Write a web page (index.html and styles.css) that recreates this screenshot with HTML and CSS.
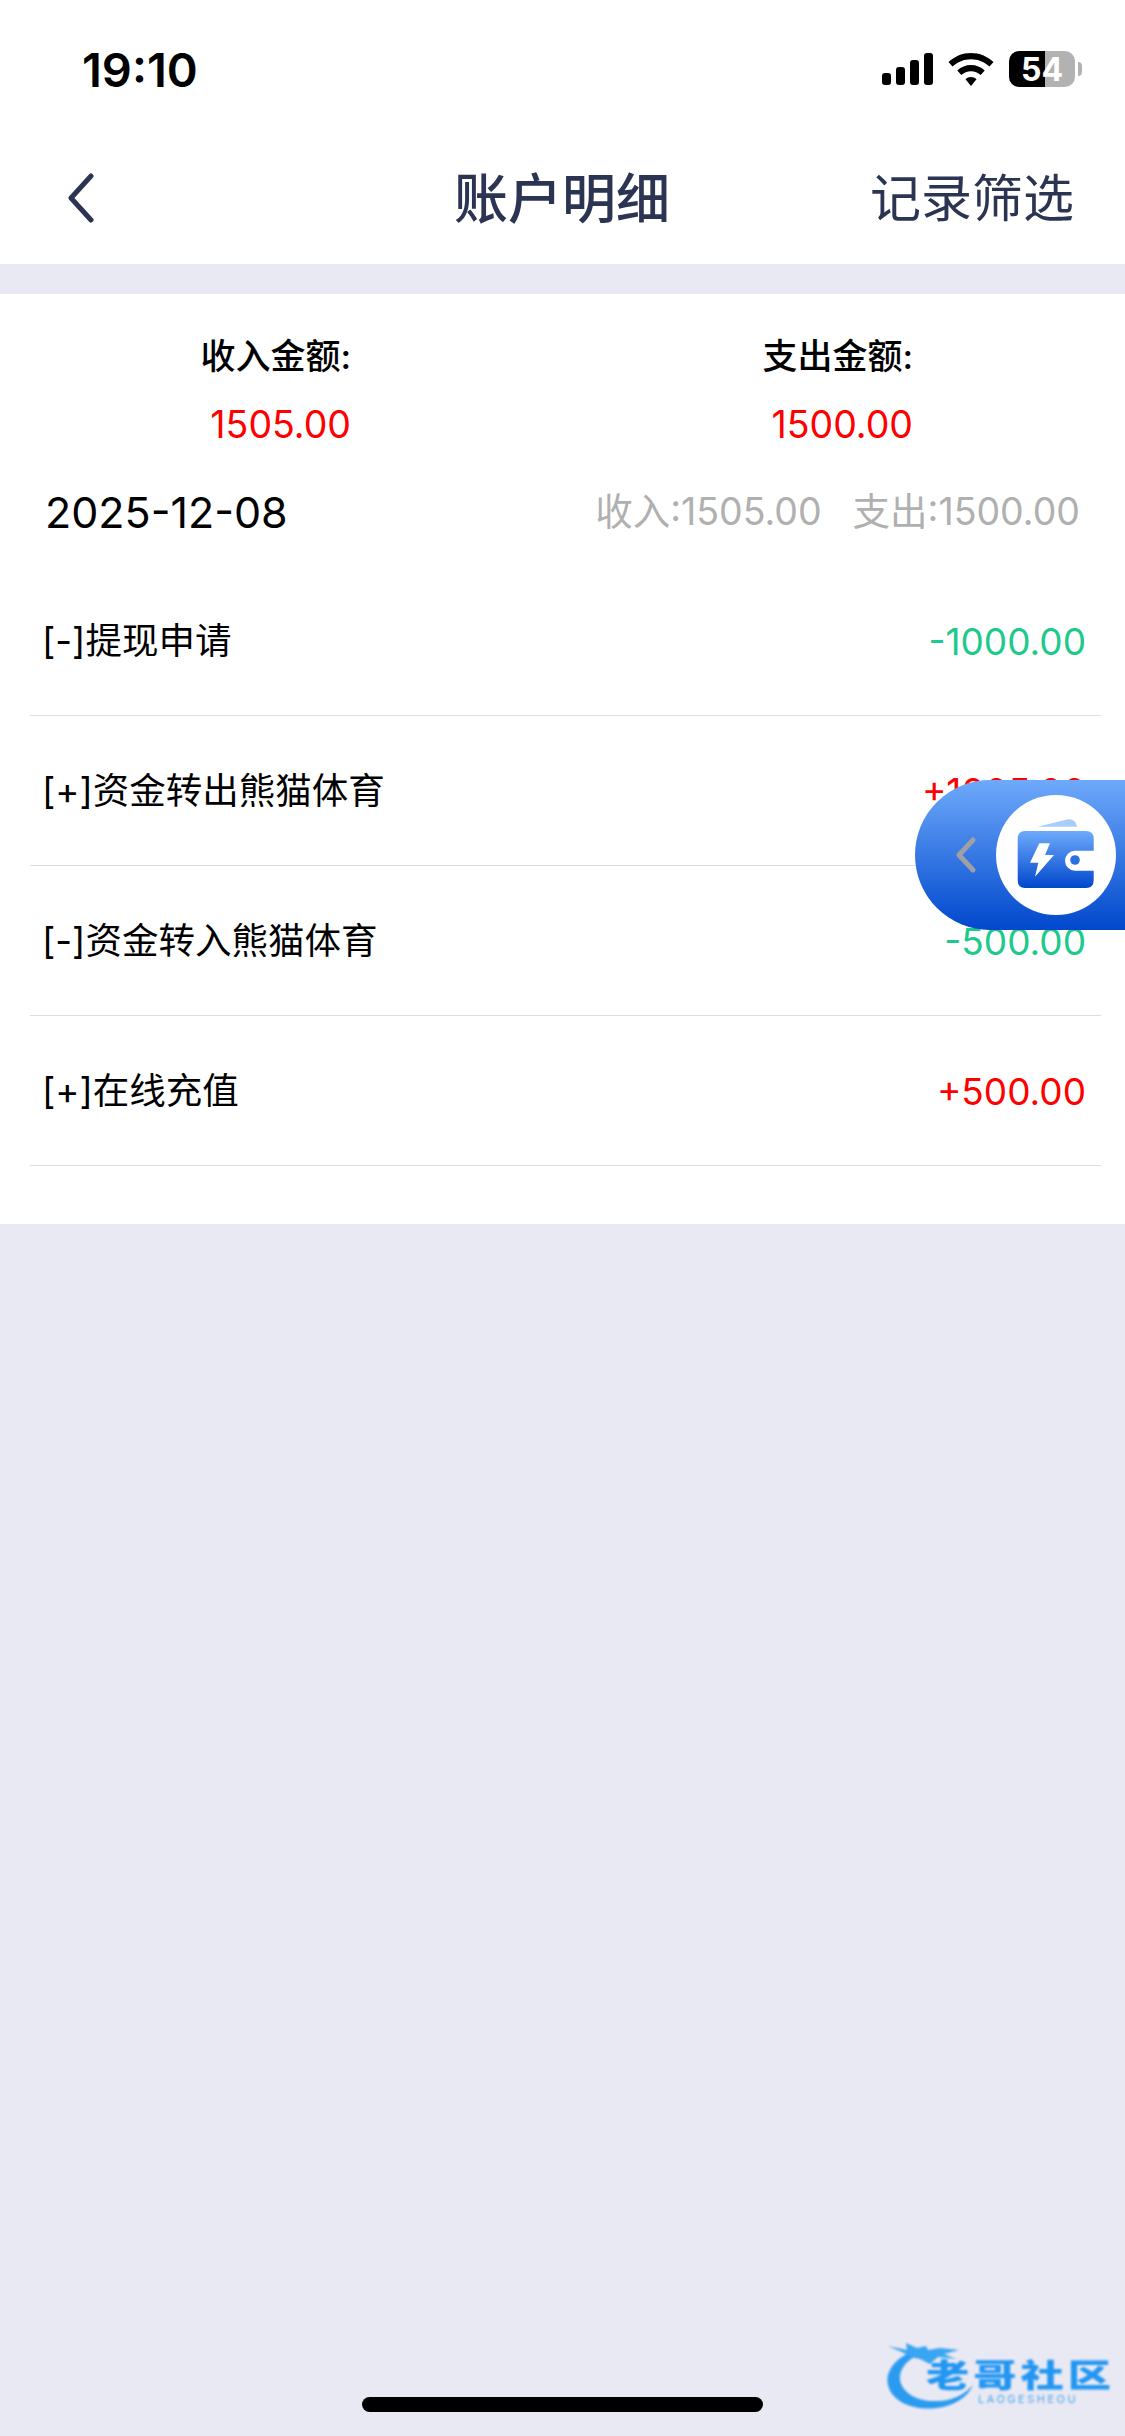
FILE: index.html
```html
<!DOCTYPE html>
<html>
<head>
	<title>账户明细</title>
	<meta charset="utf-8">
	<link rel="stylesheet" href="styles.css">
</head>
<body>
	<div class="page">
		<div class="status-bar">
			<span class="time">19:10</span>
			<div class="status-icons">
				<svg class="signal" width="51" height="32" viewBox="0 0 51 32">
					<rect x="0" y="20" width="9" height="12" rx="3"/>
					<rect x="14" y="14" width="9" height="18" rx="3"/>
					<rect x="28" y="7" width="9" height="25" rx="3"/>
					<rect x="42" y="0" width="9" height="32" rx="3"/>
				</svg>
				<svg class="wifi" width="46" height="33" viewBox="0 0 46 33">
					<path d="M23 0C14.500 0 6.700 3.300 0.500 9L4.500 13.600C9.500 9 16 6.300 23 6.300S36.500 9 41.500 13.600L45.500 9C39.300 3.300 31.500 0 23 0Z"/>
					<path d="M23 12C17.800 12 13.200 14 9.300 17.400L13.300 22C16 19.600 19.300 18.200 23 18.200S30 19.600 32.700 22L36.700 17.400C32.800 14 28.200 12 23 12Z"/>
					<path d="M23 24C20.900 24 19 24.800 17.500 26.200L23 33L28.500 26.200C27 24.800 25.100 24 23 24Z"/>
				</svg>
				<div class="battery">
					<div class="battery-body"><span>54</span></div>
					<div class="battery-nub"></div>
				</div>
			</div>
		</div>

		<div class="nav-bar">
			<svg class="back" width="30" height="50" viewBox="0 0 30 50">
				<path d="M25 3L5 25L25 47" fill="none" stroke="#2b3452" stroke-width="5" stroke-linecap="round" stroke-linejoin="round"/>
			</svg>
			<span class="nav-title">账户明细</span>
			<span class="nav-action">记录筛选</span>
		</div>

		<div class="content">
			<div class="summary">
				<div class="summary-col">
					<div class="summary-label">收入金额:</div>
					<div class="summary-value">1505.00</div>
				</div>
				<div class="summary-col">
					<div class="summary-label">支出金额:</div>
					<div class="summary-value">1500.00</div>
				</div>
			</div>

			<div class="date-row">
				<span class="date">2025-12-08</span>
				<div class="date-totals">
					<span>收入:1505.00</span>
					<span>支出:1500.00</span>
				</div>
			</div>

			<div class="record-list">
				<div class="record">
					<span class="record-name">[-]提现申请</span>
					<span class="record-amount minus">-1000.00</span>
				</div>
				<div class="record">
					<span class="record-name">[+]资金转出熊猫体育</span>
					<span class="record-amount plus">+1005.00</span>
				</div>
				<div class="record">
					<span class="record-name">[-]资金转入熊猫体育</span>
					<span class="record-amount minus">-500.00</span>
				</div>
				<div class="record">
					<span class="record-name">[+]在线充值</span>
					<span class="record-amount plus">+500.00</span>
				</div>
			</div>
		</div>

		<!-- floating wallet button -->
		<div class="wallet-float">
			<svg class="wallet-arrow" width="22" height="38" viewBox="0 0 22 38">
				<path d="M18 4L4 19L18 34" fill="none" stroke="#a0a0a4" stroke-width="5" stroke-linecap="round" stroke-linejoin="round"/>
			</svg>
			<div class="wallet-circle">
				<svg width="120" height="120" viewBox="0 0 120 120">
					<defs>
						<linearGradient id="walletFill" x1="0" y1="0" x2="0" y2="1">
							<stop offset="0" stop-color="#6eaafb"/>
							<stop offset="1" stop-color="#0047cc"/>
						</linearGradient>
					</defs>
					<path d="M41.700 31.700L72 24.300Q79 23.500 81.300 31.700Z" fill="#a9cdfb"/>
					<path d="M29 36H90Q97.700 36 97.700 44V55.700H79A9.700 9.700 0 0 0 79 75.700H97.700V85Q97.700 93 90 93H29Q21.700 93 21.700 85V44Q21.700 36 29 36Z" fill="url(#walletFill)"/>
					<circle cx="79" cy="65" r="4.800" fill="#2a70e0"/>
					<path d="M43.300 48.300H54L49 60H58L39 81.700L42.300 67.700H34Z" fill="#fff"/>
				</svg>
			</div>
		</div>

		<!-- watermark -->
		<div class="watermark">
			<svg class="watermark-dragon" width="230" height="90" viewBox="0 0 230 90">
				<path d="M37 15C14 22 5 38 8 50C12 68 36 76 57 73C74 71 88 62 93 50C84 60 72 66 57 66C38 67 22 58 20 45C19 34 27 24 42 18Z" fill="#2b9bf0"/>
				<path d="M8 11L27 15L26 8L37 13L46 11L48 15L60 13L79 15L64 19L76 24L58 22L50 29L40 24L30 22L24 18Z" fill="#3aa5f2"/>
			</svg>
			<div class="watermark-title">老哥社区</div>
			<div class="watermark-sub">LAOGESHEOU</div>
		</div>

		<div class="home-bar"></div>
	</div>
</body>
</html>
```

FILE: styles.css
```css
* {
	box-sizing: border-box;
}
html, body {
	margin: 0;
	padding: 0;
}
body {
	font-family: Inter, "Noto Sans CJK SC", sans-serif;
	background-color: #e9e9f3;
}
.page {
	position: relative;
	width: 1125px;
	height: 2436px;
	overflow: hidden;
	background-color: #e9e9f3;
}

/* status bar */
.status-bar {
	display: flex;
	justify-content: space-between;
	align-items: center;
	height: 132px;
	padding: 6px 43px 0 82px;
	background-color: #fff;
}
.time {
	font-size: 47px;
	font-weight: 600;
	color: #000;
}
.status-icons {
	display: flex;
	align-items: center;
	gap: 15px;
}
.battery {
	display: flex;
	align-items: center;
	gap: 3px;
}
.battery-body {
	display: flex;
	align-items: center;
	justify-content: center;
	width: 66px;
	height: 36px;
	border-radius: 10px;
	background: linear-gradient(to right, #000 54%, #b2b2b2 54%);
	color: #fff;
	font-size: 32px;
	font-weight: 700;
}
.battery-nub {
	width: 4px;
	height: 14px;
	border-radius: 0 4px 4px 0;
	background-color: #b2b2b2;
}

/* nav bar */
.nav-bar {
	display: grid;
	grid-template-columns: 1fr auto 1fr;
	align-items: center;
	height: 132px;
	padding: 0 51px 0 66px;
	background-color: #fff;
	color: #2b3452;
}
.nav-title {
	padding: 0 16px 6px 0;
	font-size: 54px;
	font-weight: 500;
}
.nav-action {
	justify-self: end;
	padding-bottom: 6px;
	font-size: 51px;
}

/* main card */
.content {
	margin-top: 30px;
	padding: 28px 0 58px;
	background-color: #fff;
}
.summary {
	display: grid;
	grid-template-columns: 562px 562px;
}
.summary-col {
	padding-right: 211px;
	text-align: right;
}
.summary-label {
	font-size: 35px;
	font-weight: 500;
	line-height: 68px;
	color: #000;
}
.summary-value {
	padding-top: 2px;
	font-size: 37.500px;
	line-height: 66px;
	color: #f00;
}
.date-row {
	display: flex;
	justify-content: space-between;
	align-items: center;
	height: 108px;
	padding: 0 45px;
}
.date {
	font-size: 43px;
	color: #000;
}
.date-totals {
	display: flex;
	gap: 31px;
	margin-bottom: 8px;
	font-size: 37.500px;
	color: #b0b0b0;
}
.record-list {
	margin: 0 24px 0 30px;
}
.record {
	display: flex;
	justify-content: space-between;
	align-items: center;
	height: 150px;
	padding: 0 15px 4px 12px;
	border-bottom: 1px solid #dcdce6;
}
.record-name {
	font-size: 36.500px;
	color: #000;
}
.record-amount {
	margin-top: 6px;
	font-size: 37px;
}
.plus {
	color: #f00;
}
.minus {
	color: #1ec98c;
}

/* floating wallet */
.wallet-float {
	position: absolute;
	top: 780px;
	left: 915px;
	display: flex;
	align-items: center;
	gap: 19px;
	width: 210px;
	height: 150px;
	padding-left: 40px;
	border-radius: 75px 0 0 75px;
	background: linear-gradient(to bottom, #6eaafb, #0047cc);
}
.wallet-circle {
	width: 120px;
	height: 120px;
	border-radius: 50%;
	background-color: #fff;
}

/* watermark */
.watermark {
	position: absolute;
	top: 2335px;
	left: 880px;
	width: 230px;
	height: 90px;
	filter: blur(0.8px);
}
.watermark-dragon {
	position: absolute;
	top: 0;
	left: 0;
}
.watermark-title {
	position: absolute;
	top: 26px;
	left: 46px;
	font-size: 32px;
	font-weight: 900;
	line-height: 30px;
	letter-spacing: 3px;
	white-space: nowrap;
	color: #2196f3;
	transform: scaleX(1.35);
	transform-origin: left center;
}
.watermark-sub {
	position: absolute;
	top: 58px;
	left: 98px;
	font-size: 11px;
	line-height: 12px;
	letter-spacing: 2.500px;
	color: #4aa6ee;
}

.home-bar {
	position: absolute;
	left: 362px;
	bottom: 24px;
	width: 401px;
	height: 15px;
	border-radius: 8px;
	background-color: #000;
}
```
